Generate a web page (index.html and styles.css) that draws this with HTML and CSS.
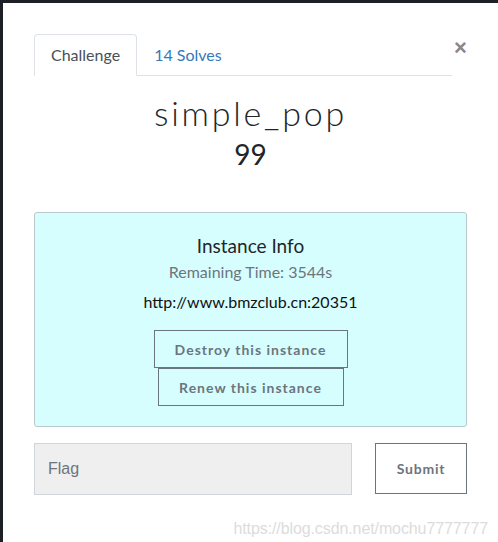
FILE: index.html
```html
<!DOCTYPE html>
<html>
<head>
<meta charset="utf-8">
<link rel="stylesheet" href="styles.css">
</head>
<body>
<div class="modal">
  <div class="header">
    <div class="tabs">
      <div class="tab active">Challenge</div>
      <div class="tab link">14 Solves</div>
    </div>
    <div class="close">&times;</div>
  </div>
  <h2 class="title">simple_pop</h2>
  <div class="points">99</div>
  <div class="info">
    <div class="info-title">Instance Info</div>
    <div class="remaining">Remaining Time: 3544s</div>
    <div class="url">http://www.bmzclub.cn:20351</div>
    <div class="btns">
      <button class="btn destroy">Destroy this instance</button>
      <button class="btn renew">Renew this instance</button>
    </div>
  </div>
  <div class="flag-row">
    <div class="flag-input">Flag</div>
    <button class="btn submit">Submit</button>
  </div>
  <div class="watermark">https://blog.csdn.net/mochu7777777</div>
</div>
</body>
</html>
```
FILE: styles.css
```css
html, body {
  margin: 0;
  padding: 0;
  height: 100%;
}
body {
  background: #1d2024;
  font-family: Lato, "Liberation Sans", sans-serif;
  overflow: hidden;
}
.modal {
  margin: 3px 0 0 3px;
  background: #fff;
  height: 539px;
  box-sizing: border-box;
  padding: 31px 31px 0 31px;
}
.header {
  display: flex;
  align-items: flex-start;
}
.tabs {
  display: flex;
  width: 420px;
  border-bottom: 1px solid #dee2e6;
  height: 41px;
}
.tab {
  padding: 8px 16px;
  line-height: 24px;
  font-size: 16px;
  border: 1px solid transparent;
  border-top-left-radius: 4px;
  border-top-right-radius: 4px;
  margin-bottom: -1px;
}
.tab.active {
  color: #495057;
  border-color: #dee2e6 #dee2e6 #fff;
  background: #fff;
}
.tab.link {
  color: #337ab7;
}
.close {
  margin-left: 2px;
  margin-top: 3px;
  width: 13px;
  font-size: 22px;
  font-weight: 700;
  line-height: 22px;
  color: #888;
  font-family: "Liberation Sans", sans-serif;
}
.title {
  margin: 17px 0 0;
  text-align: center;
  font-weight: 300;
  font-size: 34px;
  letter-spacing: 2.8px;
  line-height: 40px;
  color: #212529;
}
.points {
  text-align: center;
  font-size: 28px;
  line-height: 34px;
  margin-top: 4px;
  color: #212529;
}
.info {
  margin-top: 41px;
  background: #d7feff;
  border: 1px solid #b9c9cc;
  border-radius: 3px;
  height: 215px;
  box-sizing: border-box;
  padding-top: 20px;
  text-align: center;
}
.info-title {
  font-size: 19px;
  line-height: 26px;
  color: #212529;
}
.remaining {
  font-size: 16px;
  line-height: 20px;
  margin-top: 3px;
  color: #6c757d;
}
.url {
  font-size: 16px;
  line-height: 20px;
  margin-top: 10px;
  color: #111;
}
.btns {
  margin-top: 18px;
  display: flex;
  flex-direction: column;
  align-items: center;
}
.btn {
  font-family: Lato, sans-serif;
  font-weight: 700;
  font-size: 14px;
  letter-spacing: 1px;
  color: #6c757d;
  background: transparent;
  border: 1px solid #6c757d;
  border-radius: 0;
  padding: 0;
  margin: 0;
}
.destroy {
  width: 194px;
  height: 38px;
}
.renew {
  width: 186px;
  height: 38px;
}
.flag-row {
  display: flex;
  justify-content: space-between;
  margin-top: 16px;
}
.flag-input {
  width: 318px;
  height: 52px;
  box-sizing: border-box;
  background: #efefef;
  border: 1px solid #cfd5da;
  font-family: "Liberation Sans", sans-serif;
  font-size: 16px;
  color: #6c757d;
  padding-left: 13px;
  line-height: 50px;
}
.submit {
  width: 92px;
  height: 51px;
  background: #fff;
  letter-spacing: 0.8px;
}
.watermark {
  margin-top: 25px;
  text-align: right;
  margin-right: -21px;
  font-family: "Liberation Sans", sans-serif;
  font-size: 16px;
  color: #dcdcdc;
  letter-spacing: -0.1px;
}
```
